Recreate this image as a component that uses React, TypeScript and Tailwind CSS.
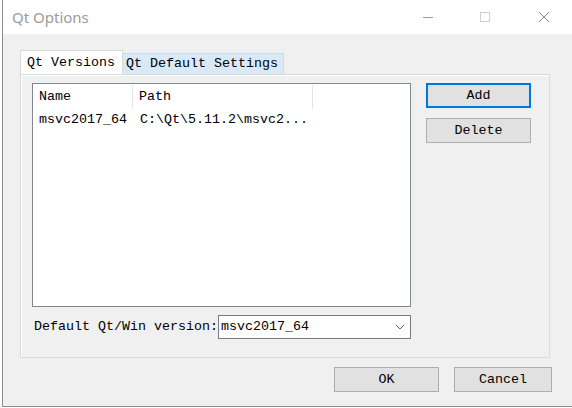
import React from 'react';

const mono = { fontFamily: '"Liberation Mono", "DejaVu Sans Mono", monospace' };

function WinButton({ label, focused, className }: { label: string; focused?: boolean; className: string }) {
  return (
    <div
      className={`flex items-center justify-center bg-[#e1e1e1] text-[13.33px] text-black ${
        focused ? 'border-2 border-[#0078d7]' : 'border border-[#adadad]'
      } ${className}`}
    >
      {label}
    </div>
  );
}

export default function App() {
  return (
    <div className="w-[572px] h-[408px] bg-white pl-[2px] pb-[1px] overflow-hidden" style={mono}>
      <div className="h-full border-l border-b border-[#8c8c8c] flex flex-col">
        {/* title bar */}
        <div className="h-[34px] bg-white flex items-center shrink-0">
          <span
            className="ml-[9px] text-[15px] text-[#9b9b9b]"
            style={{ fontFamily: '"Noto Sans", "Open Sans", sans-serif' }}
          >
            Qt Options
          </span>
          <div className="ml-auto flex items-center h-full">
            <svg width="12" height="12" viewBox="0 0 12 12" className="mr-[45px]">
              <line x1="1" y1="6.5" x2="11" y2="6.5" stroke="#999" strokeWidth="1" />
            </svg>
            <svg width="12" height="12" viewBox="0 0 12 12" className="mr-[47px]">
              <rect x="1.5" y="1.5" width="9" height="9" fill="none" stroke="#d0d0d0" strokeWidth="1" />
            </svg>
            <svg width="12" height="12" viewBox="0 0 12 12" className="mr-[22px]">
              <path d="M1 1 L11 11 M11 1 L1 11" stroke="#8a8a8a" strokeWidth="1" />
            </svg>
          </div>
        </div>

        {/* body */}
        <div className="flex-1 bg-[#f0f0f0] flex flex-col pl-[17px] pt-[17px]">
          {/* tabs */}
          <div className="flex items-end h-[23px] relative z-10">
            <div className="h-[24px] px-[6px] pt-[2px] bg-white border border-b-0 border-[#d9d9d9] text-[13.33px] text-black w-[103px]">
              Qt Versions
            </div>
            <div className="h-[21px] px-[3px] bg-[#d9e9f7] border border-b-0 border-l-0 border-[#c6dcef] text-[13.33px] text-black w-[161px] leading-[20px]">
              Qt Default Settings
            </div>
          </div>

          {/* pane */}
          <div className="w-[530px] h-[284px] bg-[#f0f0f0] border border-[#d9d9d9] shadow-[inset_1px_1px_0_#ffffff] flex pl-[11px] pt-[8px]">
            <div className="w-[379px] flex flex-col">
              <div className="h-[224px] bg-white border border-[#828790] flex flex-col">
                <div className="h-[24px] flex text-[13.33px] text-black mt-[1px]">
                  <div className="w-[100px] pl-[6px] border-r border-[#e5e5e5] leading-[24px]">Name</div>
                  <div className="w-[180px] pl-[6px] border-r border-[#e5e5e5] leading-[24px]">Path</div>
                </div>
                <div className="h-[22px] flex text-[13.33px] text-black leading-[22px]">
                  <div className="w-[100px] pl-[6px]">msvc2017_64</div>
                  <div className="pl-[7px]">C:\Qt\5.11.2\msvc2...</div>
                </div>
              </div>
              <div className="flex items-center mt-[8px] h-[24px]">
                <span className="pl-[2px] text-[13.33px] text-black w-[186px]">Default Qt/Win version:</span>
                <div className="flex-1 h-[24px] bg-white border border-[#7a7a7a] flex items-center pl-[2px] text-[13.33px] text-black">
                  msvc2017_64
                  <svg width="10" height="6" viewBox="0 0 10 6" className="ml-auto mr-[5px]">
                    <path d="M1 1 L5 5 L9 1" fill="none" stroke="#606060" strokeWidth="1" />
                  </svg>
                </div>
              </div>
            </div>
            <div className="flex flex-col ml-[15px] gap-[10px]">
              <WinButton label="Add" focused className="w-[105px] h-[25px]" />
              <WinButton label="Delete" className="w-[105px] h-[25px]" />
            </div>
          </div>

          {/* footer buttons */}
          <div className="flex justify-end pr-[20px] mt-[9px] gap-[15px]">
            <WinButton label="OK" className="w-[105px] h-[25px]" />
            <WinButton label="Cancel" className="w-[98px] h-[25px]" />
          </div>
        </div>
      </div>
    </div>
  );
}
